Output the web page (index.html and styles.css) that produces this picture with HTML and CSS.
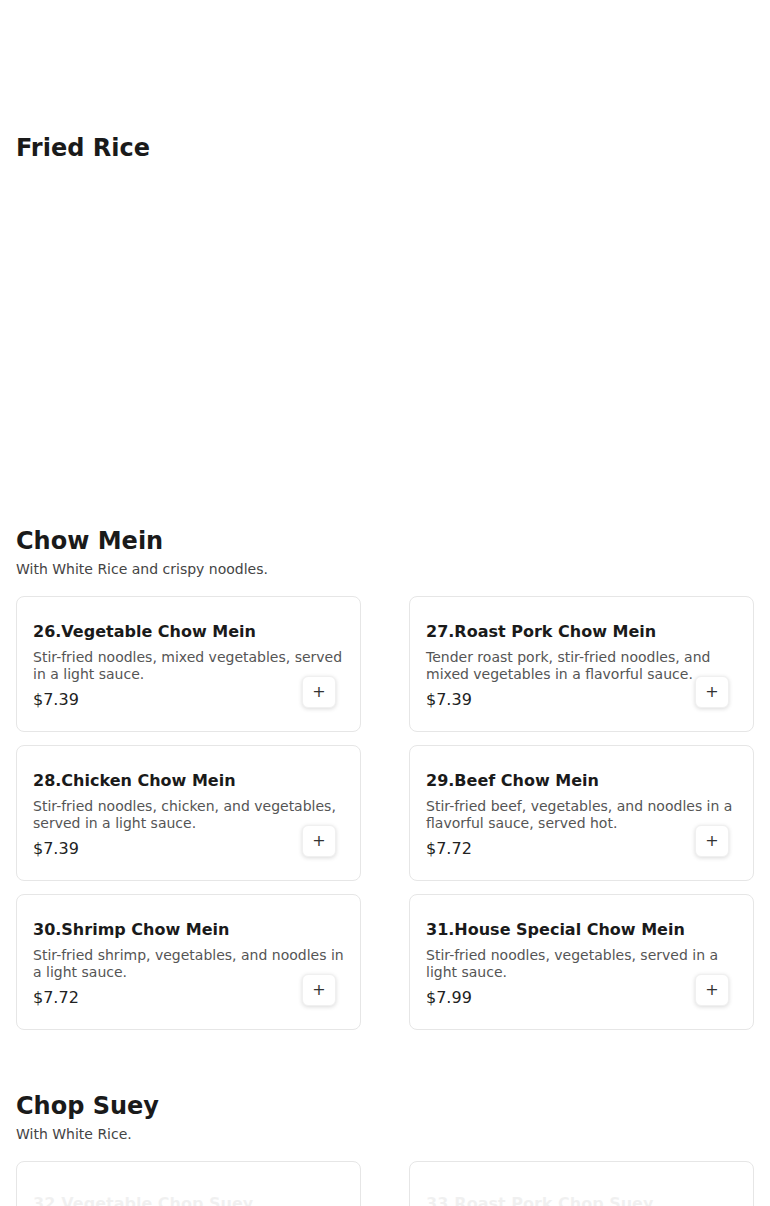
FILE: index.html
```html
<!DOCTYPE html>
<html>

<head>
    <meta name="viewport" content="width=device-width, initial-scale=1">
    <title>Menu</title>
    <link rel="stylesheet" href="styles.css">
</head>

<body>
    <div class="menu">
        <section class="category">
            <h2>Fried Rice</h2>
            <div class="items items-loading"></div>
        </section>

        <section class="category">
            <h2>Chow Mein</h2>
            <p class="note">With White Rice and crispy noodles.</p>
            <div class="items">
                <div class="item">
                    <h3>26.Vegetable Chow Mein</h3>
                    <p class="desc">Stir-fried noodles, mixed vegetables, served in a light sauce.</p>
                    <p class="price">$7.39</p>
                    <button class="addButton">+</button>
                </div>
                <div class="item">
                    <h3>27.Roast Pork Chow Mein</h3>
                    <p class="desc">Tender roast pork, stir-fried noodles, and mixed vegetables in a flavorful sauce.</p>
                    <p class="price">$7.39</p>
                    <button class="addButton">+</button>
                </div>
                <div class="item">
                    <h3>28.Chicken Chow Mein</h3>
                    <p class="desc">Stir-fried noodles, chicken, and vegetables, served in a light sauce.</p>
                    <p class="price">$7.39</p>
                    <button class="addButton">+</button>
                </div>
                <div class="item">
                    <h3>29.Beef Chow Mein</h3>
                    <p class="desc">Stir-fried beef, vegetables, and noodles in a flavorful sauce, served hot.</p>
                    <p class="price">$7.72</p>
                    <button class="addButton">+</button>
                </div>
                <div class="item">
                    <h3>30.Shrimp Chow Mein</h3>
                    <p class="desc">Stir-fried shrimp, vegetables, and noodles in a light sauce.</p>
                    <p class="price">$7.72</p>
                    <button class="addButton">+</button>
                </div>
                <div class="item">
                    <h3>31.House Special Chow Mein</h3>
                    <p class="desc">Stir-fried noodles, vegetables, served in a light sauce.</p>
                    <p class="price">$7.99</p>
                    <button class="addButton">+</button>
                </div>
            </div>
        </section>

        <section class="category">
            <h2>Chop Suey</h2>
            <p class="note">With White Rice.</p>
            <div class="items">
                <!-- these two are still fading in -->
                <div class="item fading">
                    <h3>32.Vegetable Chop Suey</h3>
                    <p class="desc">Stir-fried mixed vegetables in a light brown sauce.</p>
                    <p class="price">$7.39</p>
                    <button class="addButton">+</button>
                </div>
                <div class="item fading">
                    <h3>33.Roast Pork Chop Suey</h3>
                    <p class="desc">Roast pork and mixed vegetables in a light brown sauce.</p>
                    <p class="price">$7.39</p>
                    <button class="addButton">+</button>
                </div>
            </div>
        </section>
    </div>
</body>

</html>
```

FILE: styles.css
```css
html {
    font-family: "DejaVu Sans", sans-serif;
    color: #1a1a1a;
}

body {
    margin: 0;
    padding: 72px 16px 40px;
}

.category {
    padding-top: 61px;
}

.category h2 {
    font-size: 24px;
    line-height: 31px;
    margin: 0;
    color: #1a1a1a;
}

.note {
    font-size: 14px;
    line-height: 20px;
    margin: 2px 0 0;
    color: #444;
}

.items {
    display: grid;
    grid-template-columns: 1fr 1fr;
    column-gap: 48px;
    row-gap: 13px;
    margin-top: 17px;
}

.items-loading {
    min-height: 301px;
    margin-top: 0;
}

.item {
    position: relative;
    border: 1px solid #e6e6e6;
    border-radius: 8px;
    padding: 25px 16px 19px;
    background: #fff;
}

.item.fading h3,
.item.fading p,
.item.fading .addButton {
    opacity: 0.06;
    transform: translateY(7px);
}

.item h3 {
    font-size: 16px;
    line-height: 20px;
    margin: 0;
    color: #1a1a1a;
}

.desc {
    font-size: 14px;
    line-height: 17px;
    margin: 7px 0 0;
    color: #555;
}

.price {
    font-size: 16px;
    line-height: 24px;
    margin: 5px 0 0;
    color: #222;
}

/* add button sits over the card's bottom right corner */
.addButton {
    position: absolute;
    right: 24px;
    bottom: 23px;
    width: 34px;
    height: 32px;
    padding: 0;
    border: 1px solid #f0f0f0;
    border-radius: 6px;
    background: #fff;
    box-shadow: 0 1px 4px rgba(0, 0, 0, 0.15);
    font-family: "DejaVu Sans", sans-serif;
    font-size: 16px;
    line-height: 1;
    color: #333;
    cursor: pointer;
}
```
